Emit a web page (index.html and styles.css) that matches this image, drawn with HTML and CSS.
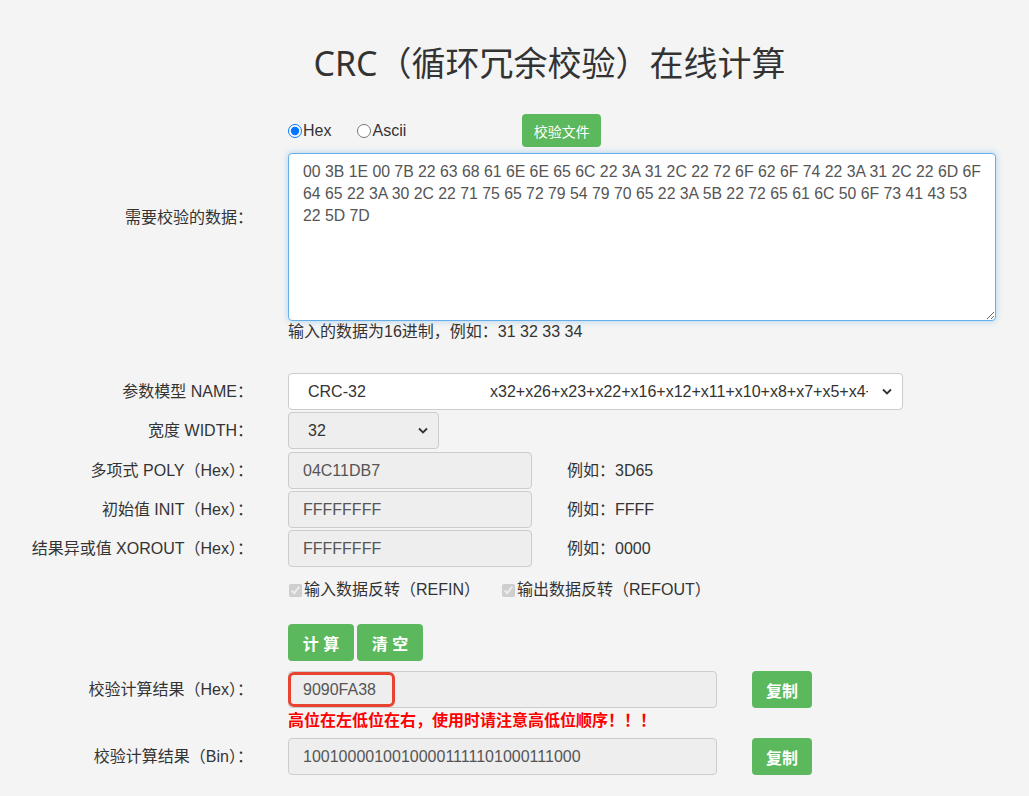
FILE: index.html
```html
<!DOCTYPE html>
<html lang="zh-CN">
<head>
  <meta charset="UTF-8">
  <meta name="viewport" content="width=device-width, initial-scale=1.0">
  <title>CRC（循环冗余校验）在线计算</title>
  <link rel="stylesheet" href="styles.css">
</head>
<body>

<main class="page">
  <h1 class="title">CRC（循环冗余校验）在线计算</h1>

  <div class="row row-mode">
    <span></span>
    <div class="mode">
      <label class="radio"><input type="radio" name="mode" checked>Hex</label>
      <label class="radio"><input type="radio" name="mode">Ascii</label>
      <button class="btn btn-file" type="button">校验文件</button>
    </div>
  </div>

  <div class="row row-data">
    <label class="label label-top">需要校验的数据：</label>
    <div>
      <textarea class="data" spellcheck="false">00 3B 1E 00 7B 22 63 68 61 6E 6E 65 6C 22 3A 31 2C 22 72 6F 62 6F 74 22 3A 31 2C 22 6D 6F
64 65 22 3A 30 2C 22 71 75 65 72 79 54 79 70 65 22 3A 5B 22 72 65 61 6C 50 6F 73 41 43 53
22 5D 7D</textarea>
      <p class="hint">输入的数据为16进制，例如：31 32 33 34</p>
    </div>
  </div>

  <div class="row row-name">
    <label class="label">参数模型 NAME：</label>
    <div class="select select-name">
      <span class="model">CRC-32</span>
      <span class="poly">x32+x26+x23+x22+x16+x12+x11+x10+x8+x7+x5+x4+x2+x+1</span>
      <svg class="chevron" width="10" height="7" viewBox="0 0 10 7"><path d="M1 1.5 L5 5.5 L9 1.5" fill="none" stroke="#333" stroke-width="1.8"/></svg>
    </div>
  </div>

  <div class="row">
    <label class="label">宽度 WIDTH：</label>
    <div class="select select-width">
      <span class="model">32</span>
      <svg class="chevron" width="10" height="7" viewBox="0 0 10 7"><path d="M1 1.5 L5 5.5 L9 1.5" fill="none" stroke="#333" stroke-width="1.8"/></svg>
    </div>
  </div>

  <div class="row row-poly">
    <label class="label">多项式 POLY（Hex）：</label>
    <div class="field">
      <input class="input input-short" type="text" value="04C11DB7" disabled>
      <span class="example">例如：3D65</span>
    </div>
  </div>

  <div class="row">
    <label class="label">初始值 INIT（Hex）：</label>
    <div class="field">
      <input class="input input-short" type="text" value="FFFFFFFF" disabled>
      <span class="example">例如：FFFF</span>
    </div>
  </div>

  <div class="row">
    <label class="label">结果异或值 XOROUT（Hex）：</label>
    <div class="field">
      <input class="input input-short" type="text" value="FFFFFFFF" disabled>
      <span class="example">例如：0000</span>
    </div>
  </div>

  <div class="row row-check">
    <span></span>
    <div class="checks">
      <label class="check"><input type="checkbox" checked disabled>输入数据反转（REFIN）</label>
      <label class="check"><input type="checkbox" checked disabled>输出数据反转（REFOUT）</label>
    </div>
  </div>

  <div class="row row-actions">
    <span></span>
    <div class="actions">
      <button class="btn btn-action" type="button">计 算</button>
      <button class="btn btn-action" type="button">清 空</button>
    </div>
  </div>

  <div class="row row-hex">
    <label class="label">校验计算结果（Hex）：</label>
    <div class="field">
      <div class="result-wrap">
        <input class="input input-result" type="text" value="9090FA38" disabled>
        <span class="mark"></span>
      </div>
      <button class="btn btn-copy" type="button">复制</button>
    </div>
  </div>

  <div class="row">
    <span></span>
    <p class="warn">高位在左低位在右，使用时请注意高低位顺序！！！</p>
  </div>

  <div class="row row-bin">
    <label class="label">校验计算结果（Bin）：</label>
    <div class="field">
      <input class="input input-result" type="text" value="10010000100100001111101000111000" disabled>
      <button class="btn btn-copy" type="button">复制</button>
    </div>
  </div>
</main>

</body>
</html>
```

FILE: styles.css
```css
* { box-sizing: border-box; }
body {
  margin: 0;
  background: #f4f4f4;
  color: #333;
  font-family: "Liberation Sans", "Noto Sans CJK SC", sans-serif;
  font-size: 16px;
  line-height: 22px;
}
.page { width: 1029px; }

.title {
  margin: 0;
  padding: 43px 0 0 70px;
  font-family: "Noto Sans", "Noto Sans CJK SC", sans-serif;
  font-size: 34px;
  line-height: 40px;
  font-weight: 400;
  text-align: center;
  color: #333;
}

.row {
  display: grid;
  grid-template-columns: 253px 1fr;
  column-gap: 35px;
  align-items: center;
  margin-top: 2px;
}
.label { text-align: right; }
.label-top { align-self: start; padding-top: 54px; }

.row-mode { margin-top: 31px; }
.mode { display: flex; align-items: center; height: 33px; }
.radio { display: flex; align-items: center; margin-right: 26px; }
.radio input { margin: 0 1px 0 0; width: 14px; height: 14px; }
.btn-file { margin-left: 90px; }

.row-data { margin-top: 6px; }
.data {
  display: block;
  width: 708px;
  height: 168px;
  padding: 7px 10px 7px 14px;
  border: 1px solid #66afe9;
  border-radius: 4px;
  box-shadow: 0 0 6px rgba(102, 175, 233, .5);
  background: #fff;
  color: #555;
  font: 15.8px/22px "Liberation Sans", sans-serif;
  resize: both;
  outline: none;
}
.hint { margin: 0; }

.row-name { margin-top: 30px; }
.select {
  display: flex;
  align-items: center;
  height: 37px;
  padding: 0 10px 0 19px;
  border: 1px solid #ccc;
  border-radius: 4px;
  color: #333;
  white-space: nowrap;
}
.select-name { width: 615px; background: #fff; }
.select-name .model { width: 182px; flex: none; }
.select-name .poly { flex: 1; overflow: hidden; margin-right: 14px; }
.select-width { width: 151px; background: #eee; justify-content: space-between; }
.chevron { flex: none; }

.field { display: flex; align-items: center; }
.input {
  height: 37px;
  padding: 0 14px;
  border: 1px solid #ccc;
  border-radius: 4px;
  background: #eee;
  color: #555;
  font: 16px "Liberation Sans", sans-serif;
}
.input-short { width: 244px; }
.input-result { width: 429px; }
.example { margin-left: 35px; }
.row-poly { margin-top: 3px; }

.row-check { margin-top: 12px; }
.checks { display: flex; }
.check { display: flex; align-items: center; margin-right: 21px; }
.check input { margin: 0 2px 0 1px; width: 13px; height: 13px; }

.btn {
  border: none;
  border-radius: 4px;
  background: #5cb85c;
  color: #fff;
  font-family: "Liberation Sans", "Noto Sans CJK SC", sans-serif;
  cursor: pointer;
}
.btn-file { width: 79px; height: 33px; font-size: 14px; }
.row-actions { margin-top: 23px; }
.actions { display: flex; gap: 3px; }
.btn-action { width: 66px; height: 37px; font-size: 16px; font-weight: 700; }
.btn-copy { width: 60px; height: 37px; margin-left: 35px; font-size: 16px; font-weight: 700; }

.row-hex { margin-top: 10px; }
.result-wrap { position: relative; }
.mark {
  position: absolute;
  left: 0;
  top: 1px;
  width: 107px;
  height: 35px;
  border: 3px solid #e84330;
  border-radius: 6px;
}
.warn { margin: 0; color: #f00; font-weight: 700; }
.row-bin { margin-top: 6px; }
```
